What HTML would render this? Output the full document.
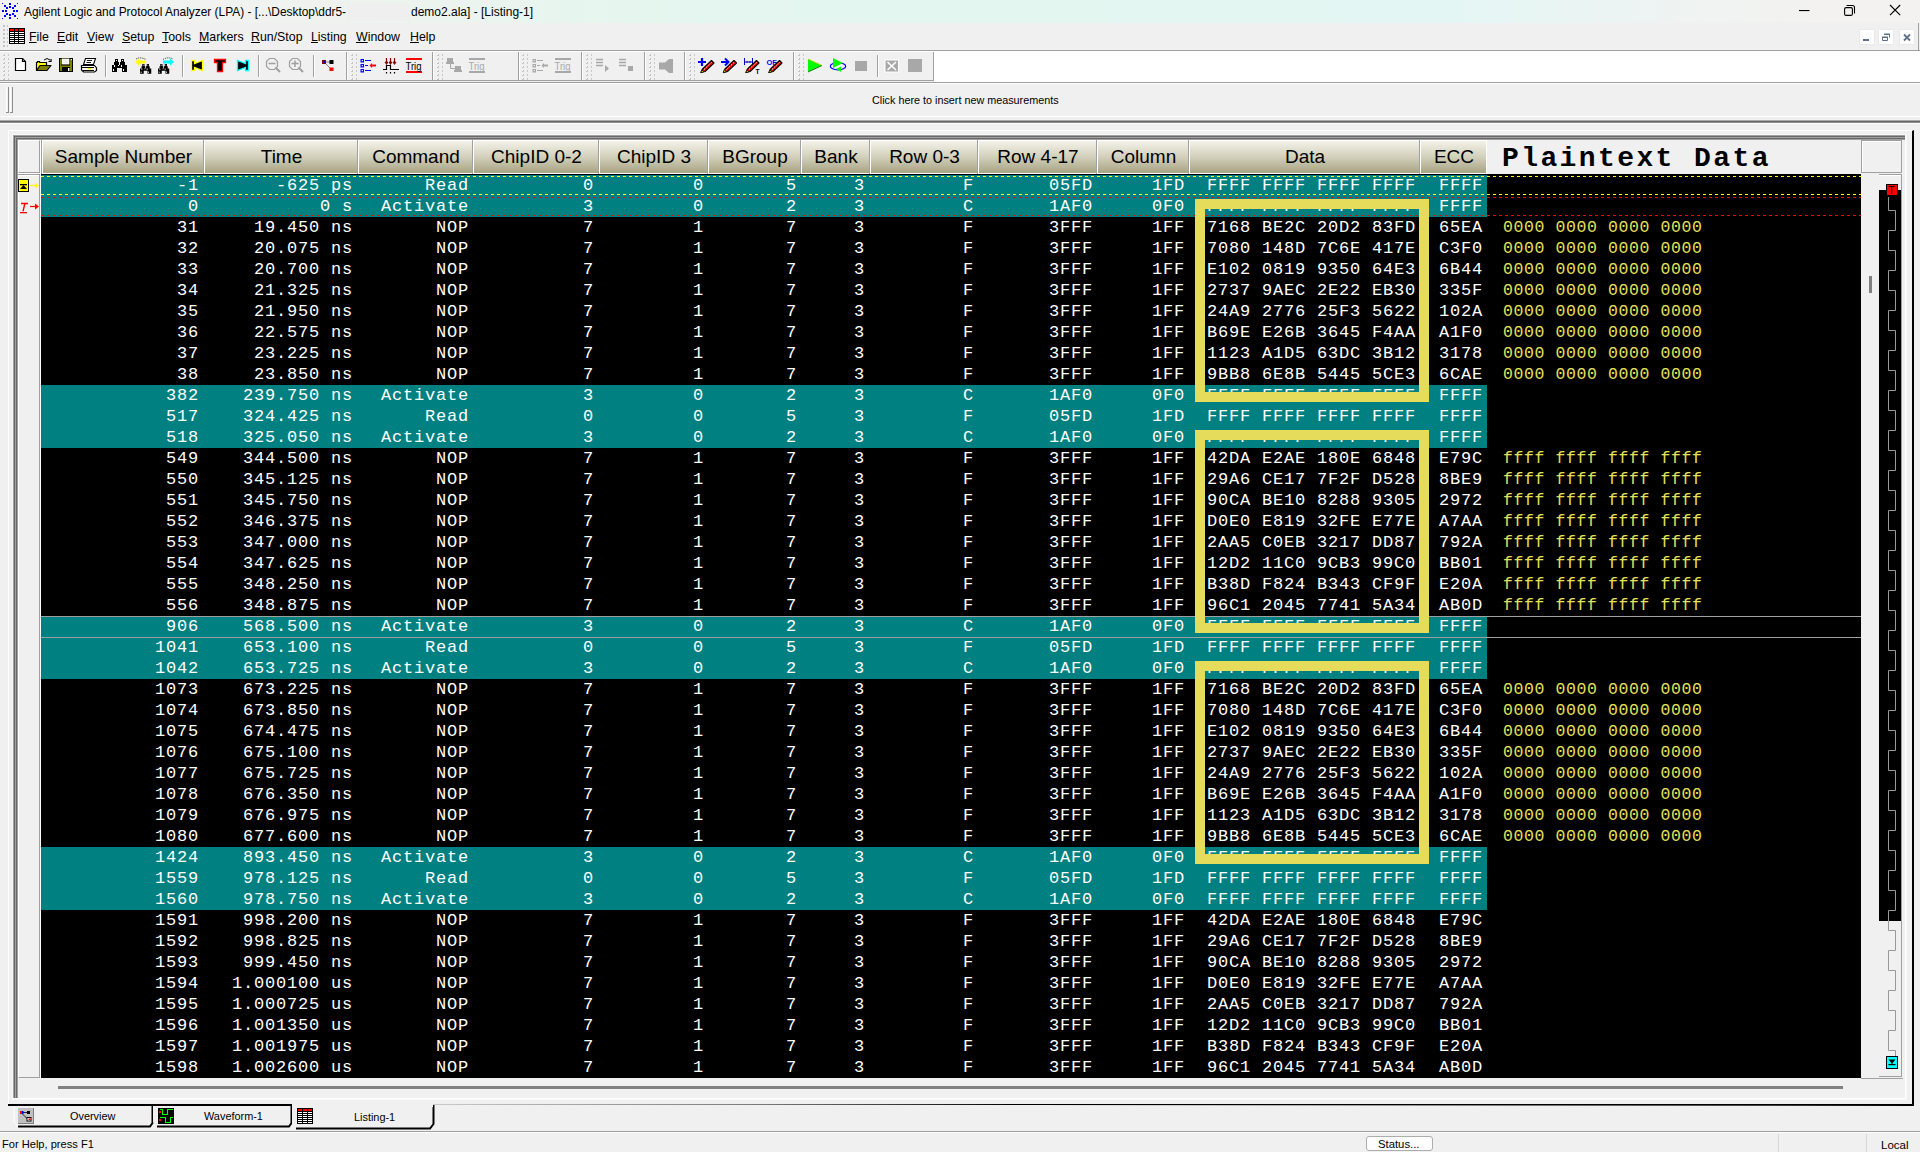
<!DOCTYPE html><html><head><meta charset="utf-8"><style>
*{margin:0;padding:0;box-sizing:border-box}
html,body{width:1920px;height:1152px;overflow:hidden;background:#f0f0f0;position:relative}
body{font-family:"Liberation Sans",sans-serif;color:#000}
.ab{position:absolute}
svg{position:absolute;overflow:visible}
.mono{font-family:"Liberation Mono",monospace}
.cell{position:absolute;height:21px;line-height:21px;text-align:right;white-space:pre;color:#fff;font-family:"Liberation Mono",monospace;font-size:17px;letter-spacing:0.8px}
.hd{position:absolute;top:140px;height:34px;text-align:center;font-size:19px;line-height:34px;color:#000}
.hg{position:absolute;left:2px;top:1px;right:1px;bottom:1px;background:linear-gradient(#f3f2e8,#d2d0bb 50%,#a7a384)}
.hd span{position:relative;left:1px}
.pt{position:absolute;left:1503px;height:21px;line-height:21px;white-space:pre;color:#e6e05a;font-family:"Liberation Mono",monospace;font-size:16.5px;letter-spacing:0.6px}
.menu{position:absolute;top:29px;font-size:13px;line-height:16px;white-space:pre;transform:scaleX(0.95);transform-origin:0 0}
</style></head><body>
<div class="ab" style="left:0px;top:0px;width:1920px;height:23px;background:linear-gradient(90deg,#f2f2f0 0%,#eff3ef 18%,#e4f6ef 35%,#e3f6f0 55%,#e3f6f3 75%,#eff3f2 88%,#f3f2f0 95%,#f3f2f0 100%)"></div>
<div class="ab" style="left:24px;top:5px;white-space:pre;font-size:11.92px;line-height:15px">Agilent Logic and Protocol Analyzer (LPA) - [...\Desktop\ddr5-</div>
<div class="ab" style="left:347px;top:3px;width:63px;height:18px;background:#eeefee"></div>
<div class="ab" style="left:411px;top:5px;white-space:pre;font-size:12px;line-height:15px">demo2.ala] - [Listing-1]</div>
<div class="ab" style="left:0px;top:23px;width:1920px;height:27px;background:#f0f0f0"></div>
<div class="menu" style="left:29px"><u>F</u>ile</div>
<div class="menu" style="left:57px"><u>E</u>dit</div>
<div class="menu" style="left:87px"><u>V</u>iew</div>
<div class="menu" style="left:122px"><u>S</u>etup</div>
<div class="menu" style="left:162px"><u>T</u>ools</div>
<div class="menu" style="left:199px"><u>M</u>arkers</div>
<div class="menu" style="left:251px"><u>R</u>un/Stop</div>
<div class="menu" style="left:311px"><u>L</u>isting</div>
<div class="menu" style="left:356px"><u>W</u>indow</div>
<div class="menu" style="left:410px"><u>H</u>elp</div>
<div class="ab" style="left:0px;top:50px;width:1920px;height:1px;background:#a0a0a0"></div>
<div class="ab" style="left:0px;top:51px;width:1920px;height:29px;background:#fff"></div>
<div class="ab" style="left:0px;top:52px;width:933px;height:28px;background:#f0f0f0"></div>
<div class="ab" style="left:0px;top:80px;width:934px;height:1px;background:#a0a0a0"></div>
<div class="ab" style="left:934px;top:51px;width:986px;height:31px;background:#fff"></div>
<div class="ab" style="left:0px;top:82px;width:1920px;height:1px;background:#a0a0a0"></div>
<div class="ab" style="left:0px;top:83px;width:1920px;height:1px;background:#fff"></div>
<div class="ab" style="left:872px;top:93px;white-space:pre;font-size:10.8px;line-height:14px">Click here to insert new measurements</div>
<div class="ab" style="left:0px;top:116px;width:1920px;height:1px;background:#fff"></div>
<div class="ab" style="left:0px;top:120px;width:1920px;height:1px;background:#a8a8a8"></div>
<div class="ab" style="left:0px;top:121px;width:1920px;height:1px;background:#696969"></div>
<div class="ab" style="left:0px;top:122px;width:1920px;height:1px;background:#8a8a8a"></div>
<div class="ab" style="left:0px;top:123px;width:1920px;height:1px;background:#fff"></div>
<div class="ab" style="left:8px;top:130px;width:1906px;height:976px;border-left:1px solid #fff;border-top:1px solid #fff;border-right:2px solid #000;border-bottom:2px solid #000"></div>
<div class="ab" style="left:12px;top:134px;width:1895px;height:1px;background:#f8f8f8"></div>
<div class="ab" style="left:12px;top:134px;width:1px;height:965px;background:#f8f8f8"></div>
<div class="ab" style="left:13px;top:135px;width:1893px;height:1px;background:#a0a0a0"></div>
<div class="ab" style="left:13px;top:135px;width:1px;height:963px;background:#a0a0a0"></div>
<div class="ab" style="left:14px;top:136px;width:1892px;height:1px;background:#696969"></div>
<div class="ab" style="left:14px;top:136px;width:1px;height:962px;background:#696969"></div>
<div class="ab" style="left:15px;top:137px;width:1891px;height:1px;background:#a0a0a0"></div>
<div class="ab" style="left:15px;top:137px;width:1px;height:961px;background:#a0a0a0"></div>
<div class="ab" style="left:16px;top:138px;width:1890px;height:1px;background:#696969"></div>
<div class="ab" style="left:16px;top:138px;width:1px;height:960px;background:#696969"></div>
<div class="ab" style="left:17px;top:139px;width:1889px;height:1px;background:#a0a0a0"></div>
<div class="ab" style="left:17px;top:139px;width:1px;height:959px;background:#a0a0a0"></div>
<div class="ab" style="left:13px;top:1098px;width:1893px;height:1px;background:#fff"></div>
<div class="ab" style="left:12px;top:1099px;width:1895px;height:1px;background:#f8f8f8"></div>
<div class="ab" style="left:1905px;top:135px;width:1px;height:964px;background:#fff"></div>
<div class="ab" style="left:1906px;top:134px;width:1px;height:966px;background:#f8f8f8"></div>
<div class="ab" style="left:18px;top:140px;width:22px;height:33px;background:#f0f0f0;border-left:1px solid #fff;border-top:1px solid #fff;border-right:1px solid #a0a0a0;border-bottom:1px solid #a0a0a0"></div>
<div class="ab" style="left:18px;top:174px;width:22px;height:904px;background:#f0f0f0;border-left:1px solid #fff;border-top:1px solid #fff;border-right:1px solid #a0a0a0;border-bottom:1px solid #a0a0a0"></div>
<div class="ab" style="left:18px;top:173px;width:23px;height:1px;background:#fff"></div>
<div class="ab" style="left:18px;top:174px;width:22px;height:1px;background:#a0a0a0"></div>
<div class="ab" style="left:19px;top:175px;width:20px;height:1px;background:#fff"></div>
<div class="ab" style="left:40px;top:140px;width:1px;height:938px;background:#fff"></div>
<div class="ab" style="left:41px;top:140px;width:1820px;height:34px;background:#fff"></div>
<div class="hd" style="left:41px;width:163px"><div class="ab" style="left:0;top:0;width:1px;bottom:0;background:#a0a0a0"></div><div class="hg"></div><span>Sample Number</span></div>
<div class="hd" style="left:203px;width:155px"><div class="ab" style="left:0;top:0;width:1px;bottom:0;background:#a0a0a0"></div><div class="hg"></div><span>Time</span></div>
<div class="hd" style="left:357px;width:116px"><div class="ab" style="left:0;top:0;width:1px;bottom:0;background:#a0a0a0"></div><div class="hg"></div><span>Command</span></div>
<div class="hd" style="left:472px;width:127px"><div class="ab" style="left:0;top:0;width:1px;bottom:0;background:#a0a0a0"></div><div class="hg"></div><span>ChipID 0-2</span></div>
<div class="hd" style="left:598px;width:110px"><div class="ab" style="left:0;top:0;width:1px;bottom:0;background:#a0a0a0"></div><div class="hg"></div><span>ChipID 3</span></div>
<div class="hd" style="left:707px;width:94px"><div class="ab" style="left:0;top:0;width:1px;bottom:0;background:#a0a0a0"></div><div class="hg"></div><span>BGroup</span></div>
<div class="hd" style="left:800px;width:70px"><div class="ab" style="left:0;top:0;width:1px;bottom:0;background:#a0a0a0"></div><div class="hg"></div><span>Bank</span></div>
<div class="hd" style="left:869px;width:109px"><div class="ab" style="left:0;top:0;width:1px;bottom:0;background:#a0a0a0"></div><div class="hg"></div><span>Row 0-3</span></div>
<div class="hd" style="left:977px;width:120px"><div class="ab" style="left:0;top:0;width:1px;bottom:0;background:#a0a0a0"></div><div class="hg"></div><span>Row 4-17</span></div>
<div class="hd" style="left:1096px;width:93px"><div class="ab" style="left:0;top:0;width:1px;bottom:0;background:#a0a0a0"></div><div class="hg"></div><span>Column</span></div>
<div class="hd" style="left:1188px;width:232px"><div class="ab" style="left:0;top:0;width:1px;bottom:0;background:#a0a0a0"></div><div class="hg"></div><span>Data</span></div>
<div class="hd" style="left:1419px;width:68px"><div class="ab" style="left:0;top:0;width:1px;bottom:0;background:#a0a0a0"></div><div class="hg"></div><span>ECC</span></div>
<div class="ab" style="left:41px;top:174px;width:1820px;height:1px;background:#000"></div>
<div class="ab" style="left:1487px;top:140px;width:374px;height:34px;background:#f0f0f0"></div>
<div class="ab" style="left:1502px;top:141px;white-space:pre;font-family:'Liberation Mono',monospace;font-weight:bold;font-size:28px;line-height:35px;letter-spacing:2.4px">Plaintext Data</div>
<div class="ab" style="left:41px;top:175px;width:1820px;height:903px;background:#000"></div>
<div class="ab" style="left:41px;top:175px;width:1446px;height:21px;background:#008080"></div>
<div class="cell" style="top:175px;right:1721px">-1</div>
<div class="cell" style="top:175px;right:1567px">-625 ps</div>
<div class="cell" style="top:175px;right:1451px">Read</div>
<div class="cell" style="top:175px;right:1326px">0</div>
<div class="cell" style="top:175px;right:1216px">0</div>
<div class="cell" style="top:175px;right:1123px">5</div>
<div class="cell" style="top:175px;right:1055px">3</div>
<div class="cell" style="top:175px;right:946px">F</div>
<div class="cell" style="top:175px;right:827px">05FD</div>
<div class="cell" style="top:175px;right:735px">1FD</div>
<div class="cell" style="top:175px;right:504px">FFFF FFFF FFFF FFFF</div>
<div class="cell" style="top:175px;right:437px">FFFF</div>
<div class="ab" style="left:41px;top:196px;width:1446px;height:21px;background:#008080"></div>
<div class="cell" style="top:196px;right:1721px">0</div>
<div class="cell" style="top:196px;right:1567px">0 s</div>
<div class="cell" style="top:196px;right:1451px">Activate</div>
<div class="cell" style="top:196px;right:1326px">3</div>
<div class="cell" style="top:196px;right:1216px">0</div>
<div class="cell" style="top:196px;right:1123px">2</div>
<div class="cell" style="top:196px;right:1055px">3</div>
<div class="cell" style="top:196px;right:946px">C</div>
<div class="cell" style="top:196px;right:827px">1AF0</div>
<div class="cell" style="top:196px;right:735px">0F0</div>
<div class="cell" style="top:196px;right:504px">FFFF FFFF FFFF FFFF</div>
<div class="cell" style="top:196px;right:437px">FFFF</div>
<div class="cell" style="top:217px;right:1721px">31</div>
<div class="cell" style="top:217px;right:1567px">19.450 ns</div>
<div class="cell" style="top:217px;right:1451px">NOP</div>
<div class="cell" style="top:217px;right:1326px">7</div>
<div class="cell" style="top:217px;right:1216px">1</div>
<div class="cell" style="top:217px;right:1123px">7</div>
<div class="cell" style="top:217px;right:1055px">3</div>
<div class="cell" style="top:217px;right:946px">F</div>
<div class="cell" style="top:217px;right:827px">3FFF</div>
<div class="cell" style="top:217px;right:735px">1FF</div>
<div class="cell" style="top:217px;right:504px">7168 BE2C 20D2 83FD</div>
<div class="cell" style="top:217px;right:437px">65EA</div>
<div class="pt" style="top:217px">0000 0000 0000 0000</div>
<div class="cell" style="top:238px;right:1721px">32</div>
<div class="cell" style="top:238px;right:1567px">20.075 ns</div>
<div class="cell" style="top:238px;right:1451px">NOP</div>
<div class="cell" style="top:238px;right:1326px">7</div>
<div class="cell" style="top:238px;right:1216px">1</div>
<div class="cell" style="top:238px;right:1123px">7</div>
<div class="cell" style="top:238px;right:1055px">3</div>
<div class="cell" style="top:238px;right:946px">F</div>
<div class="cell" style="top:238px;right:827px">3FFF</div>
<div class="cell" style="top:238px;right:735px">1FF</div>
<div class="cell" style="top:238px;right:504px">7080 148D 7C6E 417E</div>
<div class="cell" style="top:238px;right:437px">C3F0</div>
<div class="pt" style="top:238px">0000 0000 0000 0000</div>
<div class="cell" style="top:259px;right:1721px">33</div>
<div class="cell" style="top:259px;right:1567px">20.700 ns</div>
<div class="cell" style="top:259px;right:1451px">NOP</div>
<div class="cell" style="top:259px;right:1326px">7</div>
<div class="cell" style="top:259px;right:1216px">1</div>
<div class="cell" style="top:259px;right:1123px">7</div>
<div class="cell" style="top:259px;right:1055px">3</div>
<div class="cell" style="top:259px;right:946px">F</div>
<div class="cell" style="top:259px;right:827px">3FFF</div>
<div class="cell" style="top:259px;right:735px">1FF</div>
<div class="cell" style="top:259px;right:504px">E102 0819 9350 64E3</div>
<div class="cell" style="top:259px;right:437px">6B44</div>
<div class="pt" style="top:259px">0000 0000 0000 0000</div>
<div class="cell" style="top:280px;right:1721px">34</div>
<div class="cell" style="top:280px;right:1567px">21.325 ns</div>
<div class="cell" style="top:280px;right:1451px">NOP</div>
<div class="cell" style="top:280px;right:1326px">7</div>
<div class="cell" style="top:280px;right:1216px">1</div>
<div class="cell" style="top:280px;right:1123px">7</div>
<div class="cell" style="top:280px;right:1055px">3</div>
<div class="cell" style="top:280px;right:946px">F</div>
<div class="cell" style="top:280px;right:827px">3FFF</div>
<div class="cell" style="top:280px;right:735px">1FF</div>
<div class="cell" style="top:280px;right:504px">2737 9AEC 2E22 EB30</div>
<div class="cell" style="top:280px;right:437px">335F</div>
<div class="pt" style="top:280px">0000 0000 0000 0000</div>
<div class="cell" style="top:301px;right:1721px">35</div>
<div class="cell" style="top:301px;right:1567px">21.950 ns</div>
<div class="cell" style="top:301px;right:1451px">NOP</div>
<div class="cell" style="top:301px;right:1326px">7</div>
<div class="cell" style="top:301px;right:1216px">1</div>
<div class="cell" style="top:301px;right:1123px">7</div>
<div class="cell" style="top:301px;right:1055px">3</div>
<div class="cell" style="top:301px;right:946px">F</div>
<div class="cell" style="top:301px;right:827px">3FFF</div>
<div class="cell" style="top:301px;right:735px">1FF</div>
<div class="cell" style="top:301px;right:504px">24A9 2776 25F3 5622</div>
<div class="cell" style="top:301px;right:437px">102A</div>
<div class="pt" style="top:301px">0000 0000 0000 0000</div>
<div class="cell" style="top:322px;right:1721px">36</div>
<div class="cell" style="top:322px;right:1567px">22.575 ns</div>
<div class="cell" style="top:322px;right:1451px">NOP</div>
<div class="cell" style="top:322px;right:1326px">7</div>
<div class="cell" style="top:322px;right:1216px">1</div>
<div class="cell" style="top:322px;right:1123px">7</div>
<div class="cell" style="top:322px;right:1055px">3</div>
<div class="cell" style="top:322px;right:946px">F</div>
<div class="cell" style="top:322px;right:827px">3FFF</div>
<div class="cell" style="top:322px;right:735px">1FF</div>
<div class="cell" style="top:322px;right:504px">B69E E26B 3645 F4AA</div>
<div class="cell" style="top:322px;right:437px">A1F0</div>
<div class="pt" style="top:322px">0000 0000 0000 0000</div>
<div class="cell" style="top:343px;right:1721px">37</div>
<div class="cell" style="top:343px;right:1567px">23.225 ns</div>
<div class="cell" style="top:343px;right:1451px">NOP</div>
<div class="cell" style="top:343px;right:1326px">7</div>
<div class="cell" style="top:343px;right:1216px">1</div>
<div class="cell" style="top:343px;right:1123px">7</div>
<div class="cell" style="top:343px;right:1055px">3</div>
<div class="cell" style="top:343px;right:946px">F</div>
<div class="cell" style="top:343px;right:827px">3FFF</div>
<div class="cell" style="top:343px;right:735px">1FF</div>
<div class="cell" style="top:343px;right:504px">1123 A1D5 63DC 3B12</div>
<div class="cell" style="top:343px;right:437px">3178</div>
<div class="pt" style="top:343px">0000 0000 0000 0000</div>
<div class="cell" style="top:364px;right:1721px">38</div>
<div class="cell" style="top:364px;right:1567px">23.850 ns</div>
<div class="cell" style="top:364px;right:1451px">NOP</div>
<div class="cell" style="top:364px;right:1326px">7</div>
<div class="cell" style="top:364px;right:1216px">1</div>
<div class="cell" style="top:364px;right:1123px">7</div>
<div class="cell" style="top:364px;right:1055px">3</div>
<div class="cell" style="top:364px;right:946px">F</div>
<div class="cell" style="top:364px;right:827px">3FFF</div>
<div class="cell" style="top:364px;right:735px">1FF</div>
<div class="cell" style="top:364px;right:504px">9BB8 6E8B 5445 5CE3</div>
<div class="cell" style="top:364px;right:437px">6CAE</div>
<div class="pt" style="top:364px">0000 0000 0000 0000</div>
<div class="ab" style="left:41px;top:385px;width:1446px;height:21px;background:#008080"></div>
<div class="cell" style="top:385px;right:1721px">382</div>
<div class="cell" style="top:385px;right:1567px">239.750 ns</div>
<div class="cell" style="top:385px;right:1451px">Activate</div>
<div class="cell" style="top:385px;right:1326px">3</div>
<div class="cell" style="top:385px;right:1216px">0</div>
<div class="cell" style="top:385px;right:1123px">2</div>
<div class="cell" style="top:385px;right:1055px">3</div>
<div class="cell" style="top:385px;right:946px">C</div>
<div class="cell" style="top:385px;right:827px">1AF0</div>
<div class="cell" style="top:385px;right:735px">0F0</div>
<div class="cell" style="top:385px;right:504px">FFFF FFFF FFFF FFFF</div>
<div class="cell" style="top:385px;right:437px">FFFF</div>
<div class="ab" style="left:41px;top:406px;width:1446px;height:21px;background:#008080"></div>
<div class="cell" style="top:406px;right:1721px">517</div>
<div class="cell" style="top:406px;right:1567px">324.425 ns</div>
<div class="cell" style="top:406px;right:1451px">Read</div>
<div class="cell" style="top:406px;right:1326px">0</div>
<div class="cell" style="top:406px;right:1216px">0</div>
<div class="cell" style="top:406px;right:1123px">5</div>
<div class="cell" style="top:406px;right:1055px">3</div>
<div class="cell" style="top:406px;right:946px">F</div>
<div class="cell" style="top:406px;right:827px">05FD</div>
<div class="cell" style="top:406px;right:735px">1FD</div>
<div class="cell" style="top:406px;right:504px">FFFF FFFF FFFF FFFF</div>
<div class="cell" style="top:406px;right:437px">FFFF</div>
<div class="ab" style="left:41px;top:427px;width:1446px;height:21px;background:#008080"></div>
<div class="cell" style="top:427px;right:1721px">518</div>
<div class="cell" style="top:427px;right:1567px">325.050 ns</div>
<div class="cell" style="top:427px;right:1451px">Activate</div>
<div class="cell" style="top:427px;right:1326px">3</div>
<div class="cell" style="top:427px;right:1216px">0</div>
<div class="cell" style="top:427px;right:1123px">2</div>
<div class="cell" style="top:427px;right:1055px">3</div>
<div class="cell" style="top:427px;right:946px">C</div>
<div class="cell" style="top:427px;right:827px">1AF0</div>
<div class="cell" style="top:427px;right:735px">0F0</div>
<div class="cell" style="top:427px;right:504px">FFFF FFFF FFFF FFFF</div>
<div class="cell" style="top:427px;right:437px">FFFF</div>
<div class="cell" style="top:448px;right:1721px">549</div>
<div class="cell" style="top:448px;right:1567px">344.500 ns</div>
<div class="cell" style="top:448px;right:1451px">NOP</div>
<div class="cell" style="top:448px;right:1326px">7</div>
<div class="cell" style="top:448px;right:1216px">1</div>
<div class="cell" style="top:448px;right:1123px">7</div>
<div class="cell" style="top:448px;right:1055px">3</div>
<div class="cell" style="top:448px;right:946px">F</div>
<div class="cell" style="top:448px;right:827px">3FFF</div>
<div class="cell" style="top:448px;right:735px">1FF</div>
<div class="cell" style="top:448px;right:504px">42DA E2AE 180E 6848</div>
<div class="cell" style="top:448px;right:437px">E79C</div>
<div class="pt" style="top:448px">ffff ffff ffff ffff</div>
<div class="cell" style="top:469px;right:1721px">550</div>
<div class="cell" style="top:469px;right:1567px">345.125 ns</div>
<div class="cell" style="top:469px;right:1451px">NOP</div>
<div class="cell" style="top:469px;right:1326px">7</div>
<div class="cell" style="top:469px;right:1216px">1</div>
<div class="cell" style="top:469px;right:1123px">7</div>
<div class="cell" style="top:469px;right:1055px">3</div>
<div class="cell" style="top:469px;right:946px">F</div>
<div class="cell" style="top:469px;right:827px">3FFF</div>
<div class="cell" style="top:469px;right:735px">1FF</div>
<div class="cell" style="top:469px;right:504px">29A6 CE17 7F2F D528</div>
<div class="cell" style="top:469px;right:437px">8BE9</div>
<div class="pt" style="top:469px">ffff ffff ffff ffff</div>
<div class="cell" style="top:490px;right:1721px">551</div>
<div class="cell" style="top:490px;right:1567px">345.750 ns</div>
<div class="cell" style="top:490px;right:1451px">NOP</div>
<div class="cell" style="top:490px;right:1326px">7</div>
<div class="cell" style="top:490px;right:1216px">1</div>
<div class="cell" style="top:490px;right:1123px">7</div>
<div class="cell" style="top:490px;right:1055px">3</div>
<div class="cell" style="top:490px;right:946px">F</div>
<div class="cell" style="top:490px;right:827px">3FFF</div>
<div class="cell" style="top:490px;right:735px">1FF</div>
<div class="cell" style="top:490px;right:504px">90CA BE10 8288 9305</div>
<div class="cell" style="top:490px;right:437px">2972</div>
<div class="pt" style="top:490px">ffff ffff ffff ffff</div>
<div class="cell" style="top:511px;right:1721px">552</div>
<div class="cell" style="top:511px;right:1567px">346.375 ns</div>
<div class="cell" style="top:511px;right:1451px">NOP</div>
<div class="cell" style="top:511px;right:1326px">7</div>
<div class="cell" style="top:511px;right:1216px">1</div>
<div class="cell" style="top:511px;right:1123px">7</div>
<div class="cell" style="top:511px;right:1055px">3</div>
<div class="cell" style="top:511px;right:946px">F</div>
<div class="cell" style="top:511px;right:827px">3FFF</div>
<div class="cell" style="top:511px;right:735px">1FF</div>
<div class="cell" style="top:511px;right:504px">D0E0 E819 32FE E77E</div>
<div class="cell" style="top:511px;right:437px">A7AA</div>
<div class="pt" style="top:511px">ffff ffff ffff ffff</div>
<div class="cell" style="top:532px;right:1721px">553</div>
<div class="cell" style="top:532px;right:1567px">347.000 ns</div>
<div class="cell" style="top:532px;right:1451px">NOP</div>
<div class="cell" style="top:532px;right:1326px">7</div>
<div class="cell" style="top:532px;right:1216px">1</div>
<div class="cell" style="top:532px;right:1123px">7</div>
<div class="cell" style="top:532px;right:1055px">3</div>
<div class="cell" style="top:532px;right:946px">F</div>
<div class="cell" style="top:532px;right:827px">3FFF</div>
<div class="cell" style="top:532px;right:735px">1FF</div>
<div class="cell" style="top:532px;right:504px">2AA5 C0EB 3217 DD87</div>
<div class="cell" style="top:532px;right:437px">792A</div>
<div class="pt" style="top:532px">ffff ffff ffff ffff</div>
<div class="cell" style="top:553px;right:1721px">554</div>
<div class="cell" style="top:553px;right:1567px">347.625 ns</div>
<div class="cell" style="top:553px;right:1451px">NOP</div>
<div class="cell" style="top:553px;right:1326px">7</div>
<div class="cell" style="top:553px;right:1216px">1</div>
<div class="cell" style="top:553px;right:1123px">7</div>
<div class="cell" style="top:553px;right:1055px">3</div>
<div class="cell" style="top:553px;right:946px">F</div>
<div class="cell" style="top:553px;right:827px">3FFF</div>
<div class="cell" style="top:553px;right:735px">1FF</div>
<div class="cell" style="top:553px;right:504px">12D2 11C0 9CB3 99C0</div>
<div class="cell" style="top:553px;right:437px">BB01</div>
<div class="pt" style="top:553px">ffff ffff ffff ffff</div>
<div class="cell" style="top:574px;right:1721px">555</div>
<div class="cell" style="top:574px;right:1567px">348.250 ns</div>
<div class="cell" style="top:574px;right:1451px">NOP</div>
<div class="cell" style="top:574px;right:1326px">7</div>
<div class="cell" style="top:574px;right:1216px">1</div>
<div class="cell" style="top:574px;right:1123px">7</div>
<div class="cell" style="top:574px;right:1055px">3</div>
<div class="cell" style="top:574px;right:946px">F</div>
<div class="cell" style="top:574px;right:827px">3FFF</div>
<div class="cell" style="top:574px;right:735px">1FF</div>
<div class="cell" style="top:574px;right:504px">B38D F824 B343 CF9F</div>
<div class="cell" style="top:574px;right:437px">E20A</div>
<div class="pt" style="top:574px">ffff ffff ffff ffff</div>
<div class="cell" style="top:595px;right:1721px">556</div>
<div class="cell" style="top:595px;right:1567px">348.875 ns</div>
<div class="cell" style="top:595px;right:1451px">NOP</div>
<div class="cell" style="top:595px;right:1326px">7</div>
<div class="cell" style="top:595px;right:1216px">1</div>
<div class="cell" style="top:595px;right:1123px">7</div>
<div class="cell" style="top:595px;right:1055px">3</div>
<div class="cell" style="top:595px;right:946px">F</div>
<div class="cell" style="top:595px;right:827px">3FFF</div>
<div class="cell" style="top:595px;right:735px">1FF</div>
<div class="cell" style="top:595px;right:504px">96C1 2045 7741 5A34</div>
<div class="cell" style="top:595px;right:437px">AB0D</div>
<div class="pt" style="top:595px">ffff ffff ffff ffff</div>
<div class="ab" style="left:41px;top:616px;width:1446px;height:21px;background:#008080"></div>
<div class="cell" style="top:616px;right:1721px">906</div>
<div class="cell" style="top:616px;right:1567px">568.500 ns</div>
<div class="cell" style="top:616px;right:1451px">Activate</div>
<div class="cell" style="top:616px;right:1326px">3</div>
<div class="cell" style="top:616px;right:1216px">0</div>
<div class="cell" style="top:616px;right:1123px">2</div>
<div class="cell" style="top:616px;right:1055px">3</div>
<div class="cell" style="top:616px;right:946px">C</div>
<div class="cell" style="top:616px;right:827px">1AF0</div>
<div class="cell" style="top:616px;right:735px">0F0</div>
<div class="cell" style="top:616px;right:504px">FFFF FFFF FFFF FFFF</div>
<div class="cell" style="top:616px;right:437px">FFFF</div>
<div class="ab" style="left:41px;top:637px;width:1446px;height:21px;background:#008080"></div>
<div class="cell" style="top:637px;right:1721px">1041</div>
<div class="cell" style="top:637px;right:1567px">653.100 ns</div>
<div class="cell" style="top:637px;right:1451px">Read</div>
<div class="cell" style="top:637px;right:1326px">0</div>
<div class="cell" style="top:637px;right:1216px">0</div>
<div class="cell" style="top:637px;right:1123px">5</div>
<div class="cell" style="top:637px;right:1055px">3</div>
<div class="cell" style="top:637px;right:946px">F</div>
<div class="cell" style="top:637px;right:827px">05FD</div>
<div class="cell" style="top:637px;right:735px">1FD</div>
<div class="cell" style="top:637px;right:504px">FFFF FFFF FFFF FFFF</div>
<div class="cell" style="top:637px;right:437px">FFFF</div>
<div class="ab" style="left:41px;top:658px;width:1446px;height:21px;background:#008080"></div>
<div class="cell" style="top:658px;right:1721px">1042</div>
<div class="cell" style="top:658px;right:1567px">653.725 ns</div>
<div class="cell" style="top:658px;right:1451px">Activate</div>
<div class="cell" style="top:658px;right:1326px">3</div>
<div class="cell" style="top:658px;right:1216px">0</div>
<div class="cell" style="top:658px;right:1123px">2</div>
<div class="cell" style="top:658px;right:1055px">3</div>
<div class="cell" style="top:658px;right:946px">C</div>
<div class="cell" style="top:658px;right:827px">1AF0</div>
<div class="cell" style="top:658px;right:735px">0F0</div>
<div class="cell" style="top:658px;right:504px">FFFF FFFF FFFF FFFF</div>
<div class="cell" style="top:658px;right:437px">FFFF</div>
<div class="cell" style="top:679px;right:1721px">1073</div>
<div class="cell" style="top:679px;right:1567px">673.225 ns</div>
<div class="cell" style="top:679px;right:1451px">NOP</div>
<div class="cell" style="top:679px;right:1326px">7</div>
<div class="cell" style="top:679px;right:1216px">1</div>
<div class="cell" style="top:679px;right:1123px">7</div>
<div class="cell" style="top:679px;right:1055px">3</div>
<div class="cell" style="top:679px;right:946px">F</div>
<div class="cell" style="top:679px;right:827px">3FFF</div>
<div class="cell" style="top:679px;right:735px">1FF</div>
<div class="cell" style="top:679px;right:504px">7168 BE2C 20D2 83FD</div>
<div class="cell" style="top:679px;right:437px">65EA</div>
<div class="pt" style="top:679px">0000 0000 0000 0000</div>
<div class="cell" style="top:700px;right:1721px">1074</div>
<div class="cell" style="top:700px;right:1567px">673.850 ns</div>
<div class="cell" style="top:700px;right:1451px">NOP</div>
<div class="cell" style="top:700px;right:1326px">7</div>
<div class="cell" style="top:700px;right:1216px">1</div>
<div class="cell" style="top:700px;right:1123px">7</div>
<div class="cell" style="top:700px;right:1055px">3</div>
<div class="cell" style="top:700px;right:946px">F</div>
<div class="cell" style="top:700px;right:827px">3FFF</div>
<div class="cell" style="top:700px;right:735px">1FF</div>
<div class="cell" style="top:700px;right:504px">7080 148D 7C6E 417E</div>
<div class="cell" style="top:700px;right:437px">C3F0</div>
<div class="pt" style="top:700px">0000 0000 0000 0000</div>
<div class="cell" style="top:721px;right:1721px">1075</div>
<div class="cell" style="top:721px;right:1567px">674.475 ns</div>
<div class="cell" style="top:721px;right:1451px">NOP</div>
<div class="cell" style="top:721px;right:1326px">7</div>
<div class="cell" style="top:721px;right:1216px">1</div>
<div class="cell" style="top:721px;right:1123px">7</div>
<div class="cell" style="top:721px;right:1055px">3</div>
<div class="cell" style="top:721px;right:946px">F</div>
<div class="cell" style="top:721px;right:827px">3FFF</div>
<div class="cell" style="top:721px;right:735px">1FF</div>
<div class="cell" style="top:721px;right:504px">E102 0819 9350 64E3</div>
<div class="cell" style="top:721px;right:437px">6B44</div>
<div class="pt" style="top:721px">0000 0000 0000 0000</div>
<div class="cell" style="top:742px;right:1721px">1076</div>
<div class="cell" style="top:742px;right:1567px">675.100 ns</div>
<div class="cell" style="top:742px;right:1451px">NOP</div>
<div class="cell" style="top:742px;right:1326px">7</div>
<div class="cell" style="top:742px;right:1216px">1</div>
<div class="cell" style="top:742px;right:1123px">7</div>
<div class="cell" style="top:742px;right:1055px">3</div>
<div class="cell" style="top:742px;right:946px">F</div>
<div class="cell" style="top:742px;right:827px">3FFF</div>
<div class="cell" style="top:742px;right:735px">1FF</div>
<div class="cell" style="top:742px;right:504px">2737 9AEC 2E22 EB30</div>
<div class="cell" style="top:742px;right:437px">335F</div>
<div class="pt" style="top:742px">0000 0000 0000 0000</div>
<div class="cell" style="top:763px;right:1721px">1077</div>
<div class="cell" style="top:763px;right:1567px">675.725 ns</div>
<div class="cell" style="top:763px;right:1451px">NOP</div>
<div class="cell" style="top:763px;right:1326px">7</div>
<div class="cell" style="top:763px;right:1216px">1</div>
<div class="cell" style="top:763px;right:1123px">7</div>
<div class="cell" style="top:763px;right:1055px">3</div>
<div class="cell" style="top:763px;right:946px">F</div>
<div class="cell" style="top:763px;right:827px">3FFF</div>
<div class="cell" style="top:763px;right:735px">1FF</div>
<div class="cell" style="top:763px;right:504px">24A9 2776 25F3 5622</div>
<div class="cell" style="top:763px;right:437px">102A</div>
<div class="pt" style="top:763px">0000 0000 0000 0000</div>
<div class="cell" style="top:784px;right:1721px">1078</div>
<div class="cell" style="top:784px;right:1567px">676.350 ns</div>
<div class="cell" style="top:784px;right:1451px">NOP</div>
<div class="cell" style="top:784px;right:1326px">7</div>
<div class="cell" style="top:784px;right:1216px">1</div>
<div class="cell" style="top:784px;right:1123px">7</div>
<div class="cell" style="top:784px;right:1055px">3</div>
<div class="cell" style="top:784px;right:946px">F</div>
<div class="cell" style="top:784px;right:827px">3FFF</div>
<div class="cell" style="top:784px;right:735px">1FF</div>
<div class="cell" style="top:784px;right:504px">B69E E26B 3645 F4AA</div>
<div class="cell" style="top:784px;right:437px">A1F0</div>
<div class="pt" style="top:784px">0000 0000 0000 0000</div>
<div class="cell" style="top:805px;right:1721px">1079</div>
<div class="cell" style="top:805px;right:1567px">676.975 ns</div>
<div class="cell" style="top:805px;right:1451px">NOP</div>
<div class="cell" style="top:805px;right:1326px">7</div>
<div class="cell" style="top:805px;right:1216px">1</div>
<div class="cell" style="top:805px;right:1123px">7</div>
<div class="cell" style="top:805px;right:1055px">3</div>
<div class="cell" style="top:805px;right:946px">F</div>
<div class="cell" style="top:805px;right:827px">3FFF</div>
<div class="cell" style="top:805px;right:735px">1FF</div>
<div class="cell" style="top:805px;right:504px">1123 A1D5 63DC 3B12</div>
<div class="cell" style="top:805px;right:437px">3178</div>
<div class="pt" style="top:805px">0000 0000 0000 0000</div>
<div class="cell" style="top:826px;right:1721px">1080</div>
<div class="cell" style="top:826px;right:1567px">677.600 ns</div>
<div class="cell" style="top:826px;right:1451px">NOP</div>
<div class="cell" style="top:826px;right:1326px">7</div>
<div class="cell" style="top:826px;right:1216px">1</div>
<div class="cell" style="top:826px;right:1123px">7</div>
<div class="cell" style="top:826px;right:1055px">3</div>
<div class="cell" style="top:826px;right:946px">F</div>
<div class="cell" style="top:826px;right:827px">3FFF</div>
<div class="cell" style="top:826px;right:735px">1FF</div>
<div class="cell" style="top:826px;right:504px">9BB8 6E8B 5445 5CE3</div>
<div class="cell" style="top:826px;right:437px">6CAE</div>
<div class="pt" style="top:826px">0000 0000 0000 0000</div>
<div class="ab" style="left:41px;top:847px;width:1446px;height:21px;background:#008080"></div>
<div class="cell" style="top:847px;right:1721px">1424</div>
<div class="cell" style="top:847px;right:1567px">893.450 ns</div>
<div class="cell" style="top:847px;right:1451px">Activate</div>
<div class="cell" style="top:847px;right:1326px">3</div>
<div class="cell" style="top:847px;right:1216px">0</div>
<div class="cell" style="top:847px;right:1123px">2</div>
<div class="cell" style="top:847px;right:1055px">3</div>
<div class="cell" style="top:847px;right:946px">C</div>
<div class="cell" style="top:847px;right:827px">1AF0</div>
<div class="cell" style="top:847px;right:735px">0F0</div>
<div class="cell" style="top:847px;right:504px">FFFF FFFF FFFF FFFF</div>
<div class="cell" style="top:847px;right:437px">FFFF</div>
<div class="ab" style="left:41px;top:868px;width:1446px;height:21px;background:#008080"></div>
<div class="cell" style="top:868px;right:1721px">1559</div>
<div class="cell" style="top:868px;right:1567px">978.125 ns</div>
<div class="cell" style="top:868px;right:1451px">Read</div>
<div class="cell" style="top:868px;right:1326px">0</div>
<div class="cell" style="top:868px;right:1216px">0</div>
<div class="cell" style="top:868px;right:1123px">5</div>
<div class="cell" style="top:868px;right:1055px">3</div>
<div class="cell" style="top:868px;right:946px">F</div>
<div class="cell" style="top:868px;right:827px">05FD</div>
<div class="cell" style="top:868px;right:735px">1FD</div>
<div class="cell" style="top:868px;right:504px">FFFF FFFF FFFF FFFF</div>
<div class="cell" style="top:868px;right:437px">FFFF</div>
<div class="ab" style="left:41px;top:889px;width:1446px;height:21px;background:#008080"></div>
<div class="cell" style="top:889px;right:1721px">1560</div>
<div class="cell" style="top:889px;right:1567px">978.750 ns</div>
<div class="cell" style="top:889px;right:1451px">Activate</div>
<div class="cell" style="top:889px;right:1326px">3</div>
<div class="cell" style="top:889px;right:1216px">0</div>
<div class="cell" style="top:889px;right:1123px">2</div>
<div class="cell" style="top:889px;right:1055px">3</div>
<div class="cell" style="top:889px;right:946px">C</div>
<div class="cell" style="top:889px;right:827px">1AF0</div>
<div class="cell" style="top:889px;right:735px">0F0</div>
<div class="cell" style="top:889px;right:504px">FFFF FFFF FFFF FFFF</div>
<div class="cell" style="top:889px;right:437px">FFFF</div>
<div class="cell" style="top:910px;right:1721px">1591</div>
<div class="cell" style="top:910px;right:1567px">998.200 ns</div>
<div class="cell" style="top:910px;right:1451px">NOP</div>
<div class="cell" style="top:910px;right:1326px">7</div>
<div class="cell" style="top:910px;right:1216px">1</div>
<div class="cell" style="top:910px;right:1123px">7</div>
<div class="cell" style="top:910px;right:1055px">3</div>
<div class="cell" style="top:910px;right:946px">F</div>
<div class="cell" style="top:910px;right:827px">3FFF</div>
<div class="cell" style="top:910px;right:735px">1FF</div>
<div class="cell" style="top:910px;right:504px">42DA E2AE 180E 6848</div>
<div class="cell" style="top:910px;right:437px">E79C</div>
<div class="cell" style="top:931px;right:1721px">1592</div>
<div class="cell" style="top:931px;right:1567px">998.825 ns</div>
<div class="cell" style="top:931px;right:1451px">NOP</div>
<div class="cell" style="top:931px;right:1326px">7</div>
<div class="cell" style="top:931px;right:1216px">1</div>
<div class="cell" style="top:931px;right:1123px">7</div>
<div class="cell" style="top:931px;right:1055px">3</div>
<div class="cell" style="top:931px;right:946px">F</div>
<div class="cell" style="top:931px;right:827px">3FFF</div>
<div class="cell" style="top:931px;right:735px">1FF</div>
<div class="cell" style="top:931px;right:504px">29A6 CE17 7F2F D528</div>
<div class="cell" style="top:931px;right:437px">8BE9</div>
<div class="cell" style="top:952px;right:1721px">1593</div>
<div class="cell" style="top:952px;right:1567px">999.450 ns</div>
<div class="cell" style="top:952px;right:1451px">NOP</div>
<div class="cell" style="top:952px;right:1326px">7</div>
<div class="cell" style="top:952px;right:1216px">1</div>
<div class="cell" style="top:952px;right:1123px">7</div>
<div class="cell" style="top:952px;right:1055px">3</div>
<div class="cell" style="top:952px;right:946px">F</div>
<div class="cell" style="top:952px;right:827px">3FFF</div>
<div class="cell" style="top:952px;right:735px">1FF</div>
<div class="cell" style="top:952px;right:504px">90CA BE10 8288 9305</div>
<div class="cell" style="top:952px;right:437px">2972</div>
<div class="cell" style="top:973px;right:1721px">1594</div>
<div class="cell" style="top:973px;right:1567px">1.000100 us</div>
<div class="cell" style="top:973px;right:1451px">NOP</div>
<div class="cell" style="top:973px;right:1326px">7</div>
<div class="cell" style="top:973px;right:1216px">1</div>
<div class="cell" style="top:973px;right:1123px">7</div>
<div class="cell" style="top:973px;right:1055px">3</div>
<div class="cell" style="top:973px;right:946px">F</div>
<div class="cell" style="top:973px;right:827px">3FFF</div>
<div class="cell" style="top:973px;right:735px">1FF</div>
<div class="cell" style="top:973px;right:504px">D0E0 E819 32FE E77E</div>
<div class="cell" style="top:973px;right:437px">A7AA</div>
<div class="cell" style="top:994px;right:1721px">1595</div>
<div class="cell" style="top:994px;right:1567px">1.000725 us</div>
<div class="cell" style="top:994px;right:1451px">NOP</div>
<div class="cell" style="top:994px;right:1326px">7</div>
<div class="cell" style="top:994px;right:1216px">1</div>
<div class="cell" style="top:994px;right:1123px">7</div>
<div class="cell" style="top:994px;right:1055px">3</div>
<div class="cell" style="top:994px;right:946px">F</div>
<div class="cell" style="top:994px;right:827px">3FFF</div>
<div class="cell" style="top:994px;right:735px">1FF</div>
<div class="cell" style="top:994px;right:504px">2AA5 C0EB 3217 DD87</div>
<div class="cell" style="top:994px;right:437px">792A</div>
<div class="cell" style="top:1015px;right:1721px">1596</div>
<div class="cell" style="top:1015px;right:1567px">1.001350 us</div>
<div class="cell" style="top:1015px;right:1451px">NOP</div>
<div class="cell" style="top:1015px;right:1326px">7</div>
<div class="cell" style="top:1015px;right:1216px">1</div>
<div class="cell" style="top:1015px;right:1123px">7</div>
<div class="cell" style="top:1015px;right:1055px">3</div>
<div class="cell" style="top:1015px;right:946px">F</div>
<div class="cell" style="top:1015px;right:827px">3FFF</div>
<div class="cell" style="top:1015px;right:735px">1FF</div>
<div class="cell" style="top:1015px;right:504px">12D2 11C0 9CB3 99C0</div>
<div class="cell" style="top:1015px;right:437px">BB01</div>
<div class="cell" style="top:1036px;right:1721px">1597</div>
<div class="cell" style="top:1036px;right:1567px">1.001975 us</div>
<div class="cell" style="top:1036px;right:1451px">NOP</div>
<div class="cell" style="top:1036px;right:1326px">7</div>
<div class="cell" style="top:1036px;right:1216px">1</div>
<div class="cell" style="top:1036px;right:1123px">7</div>
<div class="cell" style="top:1036px;right:1055px">3</div>
<div class="cell" style="top:1036px;right:946px">F</div>
<div class="cell" style="top:1036px;right:827px">3FFF</div>
<div class="cell" style="top:1036px;right:735px">1FF</div>
<div class="cell" style="top:1036px;right:504px">B38D F824 B343 CF9F</div>
<div class="cell" style="top:1036px;right:437px">E20A</div>
<div class="cell" style="top:1057px;right:1721px">1598</div>
<div class="cell" style="top:1057px;right:1567px">1.002600 us</div>
<div class="cell" style="top:1057px;right:1451px">NOP</div>
<div class="cell" style="top:1057px;right:1326px">7</div>
<div class="cell" style="top:1057px;right:1216px">1</div>
<div class="cell" style="top:1057px;right:1123px">7</div>
<div class="cell" style="top:1057px;right:1055px">3</div>
<div class="cell" style="top:1057px;right:946px">F</div>
<div class="cell" style="top:1057px;right:827px">3FFF</div>
<div class="cell" style="top:1057px;right:735px">1FF</div>
<div class="cell" style="top:1057px;right:504px">96C1 2045 7741 5A34</div>
<div class="cell" style="top:1057px;right:437px">AB0D</div>
<div class="ab" style="left:41px;top:176px;width:1820px;height:1px;background:repeating-linear-gradient(90deg,#ffff00 0 3px,transparent 3px 6px)"></div>
<div class="ab" style="left:41px;top:194px;width:1820px;height:1px;background:repeating-linear-gradient(90deg,#ffff00 0 3px,transparent 3px 6px)"></div>
<div class="ab" style="left:41px;top:197px;width:1820px;height:1px;background:repeating-linear-gradient(90deg,#ff0000 0 3px,transparent 3px 6px)"></div>
<div class="ab" style="left:41px;top:215px;width:1820px;height:1px;background:repeating-linear-gradient(90deg,#ff0000 0 3px,transparent 3px 6px)"></div>
<div class="ab" style="left:41px;top:616px;width:1820px;height:1px;background:#a0a0a0"></div>
<div class="ab" style="left:41px;top:637px;width:1820px;height:1px;background:#a0a0a0"></div>
<div class="ab" style="left:1195px;top:199px;width:234px;height:203px;border:10px solid #e5dc5b"></div>
<div class="ab" style="left:1195px;top:430px;width:234px;height:203px;border:10px solid #e5dc5b"></div>
<div class="ab" style="left:1195px;top:661px;width:234px;height:203px;border:10px solid #e5dc5b"></div>
<div class="ab" style="left:1861px;top:140px;width:41px;height:33px;background:#f0f0f0;border:1px solid #a0a0a0;box-shadow:inset 1px 1px 0 #fff"></div>
<div class="ab" style="left:1879px;top:174px;width:23px;height:1px;background:#a0a0a0"></div>
<div class="ab" style="left:1879px;top:175px;width:22px;height:1px;background:#fff"></div>
<div class="ab" style="left:1901px;top:174px;width:1px;height:903px;background:#a0a0a0"></div>
<div class="ab" style="left:1879px;top:1076px;width:23px;height:1px;background:#a0a0a0"></div>
<div class="ab" style="left:1861px;top:1078px;width:42px;height:1px;background:#a0a0a0"></div>
<div class="ab" style="left:1879px;top:190px;width:22px;height:731px;background:#000"></div>
<div class="ab" style="left:1869px;top:276px;width:3px;height:17px;background:#808080"></div>
<svg style="left:0;top:0" width="1920" height="1152"><path d="M1888.5 197 V210.5 H1895.5 V230.5 H1888.5 V250.5 H1895.5 V270.5 H1888.5 V290.5 H1895.5 V310.5 H1888.5 V330.5 H1895.5 V350.5 H1888.5 V370.5 H1895.5 V390.5 H1888.5 V410.5 H1895.5 V430.5 H1888.5 V450.5 H1895.5 V470.5 H1888.5 V490.5 H1895.5 V510.5 H1888.5 V530.5 H1895.5 V550.5 H1888.5 V570.5 H1895.5 V590.5 H1888.5 V610.5 H1895.5 V630.5 H1888.5 V650.5 H1895.5 V670.5 H1888.5 V690.5 H1895.5 V710.5 H1888.5 V730.5 H1895.5 V750.5 H1888.5 V770.5 H1895.5 V790.5 H1888.5 V810.5 H1895.5 V830.5 H1888.5 V850.5 H1895.5 V870.5 H1888.5 V890.5 H1895.5 V910.5 H1888.5 V930.5 H1895.5 V950.5 H1888.5 V970.5 H1895.5 V990.5 H1888.5 V1010.5 H1895.5 V1030.5 H1888.5 V1050.5 H1895.5 V1056" fill="none" stroke="#999" stroke-width="1"/></svg>
<div class="ab" style="left:1886px;top:184px;width:12px;height:12px;background:#ff0000;border:1px solid #000"></div>
<div class="ab" style="left:1888px;top:184px;white-space:pre;font-size:11px;line-height:12px;color:#000">T</div>
<svg style="left:1886px;top:1056px" width="12" height="13" viewBox="0 0 12 13"><rect x="0.5" y="0.5" width="11" height="12" fill="#00ffff" stroke="#000"/><path d="M2.5 3.5 H9.5 L7 6.5 V7.5 H5 V6.5 Z" fill="#000"/><rect x="2.5" y="8" width="7" height="1.2" fill="#000"/></svg>
<div class="ab" style="left:58px;top:1086px;width:1785px;height:3px;background:#808080"></div>
<div class="ab" style="left:8px;top:1104px;width:1906px;height:2px;background:#000"></div>
<svg style="left:0;top:1100px" width="450" height="32" viewBox="0 1100 450 32"><path d="M14 1106 V1122 L18 1126 H150 L152 1123 V1106" fill="#f0f0f0" stroke="none"/><path d="M14 1106 V1122 L18 1126" fill="none" stroke="#fff" stroke-width="1"/><path d="M18 1126.5 H150 L152.5 1123 V1106" fill="none" stroke="#000" stroke-width="2"/><path d="M153 1106 V1122 L157 1126 H289 L291 1123 V1106" fill="#f0f0f0"/><path d="M157 1126.5 H289 L291.5 1123 V1106" fill="none" stroke="#000" stroke-width="2"/><path d="M292 1104 V1124 L296 1128 H430 L433 1124 V1106 H1914" fill="#f0f0f0"/><path d="M296 1128.5 H430 L433.5 1124 V1105" fill="none" stroke="#000" stroke-width="2"/></svg>
<div class="ab" style="left:292px;top:1104px;width:141px;height:3px;background:#f0f0f0"></div>
<div class="ab" style="left:70px;top:1109px;white-space:pre;font-size:10.9px;line-height:15px">Overview</div>
<div class="ab" style="left:204px;top:1109px;white-space:pre;font-size:10.9px;line-height:15px">Waveform-1</div>
<div class="ab" style="left:354px;top:1110px;white-space:pre;font-size:10.9px;line-height:15px">Listing-1</div>
<div class="ab" style="left:0px;top:1131px;width:1920px;height:1px;background:#a0a0a0"></div>
<div class="ab" style="left:0px;top:1132px;width:1920px;height:1px;background:#fff"></div>
<div class="ab" style="left:2px;top:1137px;white-space:pre;font-size:11.1px;line-height:15px">For Help, press F1</div>
<div class="ab" style="left:1366px;top:1136px;width:67px;height:15px;background:#fdfdfd;border:1px solid #adadad;border-radius:3px"></div>
<div class="ab" style="left:1378px;top:1137px;white-space:pre;font-size:11.3px;line-height:15px">Status...</div>
<div class="ab" style="left:1778px;top:1134px;width:1px;height:18px;background:#d8d8d8"></div>
<div class="ab" style="left:1866px;top:1134px;width:1px;height:18px;background:#d8d8d8"></div>
<div class="ab" style="left:1881px;top:1138px;white-space:pre;font-size:11.5px;line-height:15px">Local</div>
<svg style="left:0;top:50px" width="940" height="34" viewBox="0 50 940 34"><rect x="0" y="52" width="346" height="28" fill="#f0f0f0"/><rect x="346" y="52" width="1" height="28" fill="#a0a0a0"/><rect x="347" y="52" width="1" height="28" fill="#fff"/><rect x="348" y="52" width="84" height="28" fill="#f0f0f0"/><rect x="432" y="52" width="1" height="28" fill="#a0a0a0"/><rect x="433" y="52" width="1" height="28" fill="#fff"/><rect x="434" y="52" width="84" height="28" fill="#f0f0f0"/><rect x="518" y="52" width="1" height="28" fill="#a0a0a0"/><rect x="519" y="52" width="1" height="28" fill="#fff"/><rect x="520" y="52" width="61" height="28" fill="#f0f0f0"/><rect x="581" y="52" width="1" height="28" fill="#a0a0a0"/><rect x="582" y="52" width="1" height="28" fill="#fff"/><rect x="583" y="52" width="61" height="28" fill="#f0f0f0"/><rect x="644" y="52" width="1" height="28" fill="#a0a0a0"/><rect x="645" y="52" width="1" height="28" fill="#fff"/><rect x="646" y="52" width="38" height="28" fill="#f0f0f0"/><rect x="684" y="52" width="1" height="28" fill="#a0a0a0"/><rect x="685" y="52" width="1" height="28" fill="#fff"/><rect x="686" y="52" width="107" height="28" fill="#f0f0f0"/><rect x="793" y="52" width="1" height="28" fill="#a0a0a0"/><rect x="794" y="52" width="1" height="28" fill="#fff"/><rect x="795" y="52" width="138" height="28" fill="#f0f0f0"/><rect x="933" y="52" width="1" height="28" fill="#a0a0a0"/><rect x="934" y="52" width="1" height="28" fill="#fff"/><rect x="3" y="54" width="2" height="2" fill="#c4c4c4"/><rect x="3" y="54" width="1" height="1" fill="#fff"/><rect x="8" y="54" width="1" height="2" fill="#c8c8c8"/><rect x="3" y="58" width="2" height="2" fill="#c4c4c4"/><rect x="3" y="58" width="1" height="1" fill="#fff"/><rect x="8" y="58" width="1" height="2" fill="#c8c8c8"/><rect x="3" y="62" width="2" height="2" fill="#c4c4c4"/><rect x="3" y="62" width="1" height="1" fill="#fff"/><rect x="8" y="62" width="1" height="2" fill="#c8c8c8"/><rect x="3" y="66" width="2" height="2" fill="#c4c4c4"/><rect x="3" y="66" width="1" height="1" fill="#fff"/><rect x="8" y="66" width="1" height="2" fill="#c8c8c8"/><rect x="3" y="70" width="2" height="2" fill="#c4c4c4"/><rect x="3" y="70" width="1" height="1" fill="#fff"/><rect x="8" y="70" width="1" height="2" fill="#c8c8c8"/><rect x="3" y="74" width="2" height="2" fill="#c4c4c4"/><rect x="3" y="74" width="1" height="1" fill="#fff"/><rect x="8" y="74" width="1" height="2" fill="#c8c8c8"/><rect x="3" y="78" width="2" height="2" fill="#c4c4c4"/><rect x="3" y="78" width="1" height="1" fill="#fff"/><rect x="8" y="78" width="1" height="2" fill="#c8c8c8"/><rect x="351" y="54" width="2" height="2" fill="#c4c4c4"/><rect x="351" y="54" width="1" height="1" fill="#fff"/><rect x="356" y="54" width="1" height="2" fill="#c8c8c8"/><rect x="351" y="58" width="2" height="2" fill="#c4c4c4"/><rect x="351" y="58" width="1" height="1" fill="#fff"/><rect x="356" y="58" width="1" height="2" fill="#c8c8c8"/><rect x="351" y="62" width="2" height="2" fill="#c4c4c4"/><rect x="351" y="62" width="1" height="1" fill="#fff"/><rect x="356" y="62" width="1" height="2" fill="#c8c8c8"/><rect x="351" y="66" width="2" height="2" fill="#c4c4c4"/><rect x="351" y="66" width="1" height="1" fill="#fff"/><rect x="356" y="66" width="1" height="2" fill="#c8c8c8"/><rect x="351" y="70" width="2" height="2" fill="#c4c4c4"/><rect x="351" y="70" width="1" height="1" fill="#fff"/><rect x="356" y="70" width="1" height="2" fill="#c8c8c8"/><rect x="351" y="74" width="2" height="2" fill="#c4c4c4"/><rect x="351" y="74" width="1" height="1" fill="#fff"/><rect x="356" y="74" width="1" height="2" fill="#c8c8c8"/><rect x="351" y="78" width="2" height="2" fill="#c4c4c4"/><rect x="351" y="78" width="1" height="1" fill="#fff"/><rect x="356" y="78" width="1" height="2" fill="#c8c8c8"/><rect x="437" y="54" width="2" height="2" fill="#c4c4c4"/><rect x="437" y="54" width="1" height="1" fill="#fff"/><rect x="442" y="54" width="1" height="2" fill="#c8c8c8"/><rect x="437" y="58" width="2" height="2" fill="#c4c4c4"/><rect x="437" y="58" width="1" height="1" fill="#fff"/><rect x="442" y="58" width="1" height="2" fill="#c8c8c8"/><rect x="437" y="62" width="2" height="2" fill="#c4c4c4"/><rect x="437" y="62" width="1" height="1" fill="#fff"/><rect x="442" y="62" width="1" height="2" fill="#c8c8c8"/><rect x="437" y="66" width="2" height="2" fill="#c4c4c4"/><rect x="437" y="66" width="1" height="1" fill="#fff"/><rect x="442" y="66" width="1" height="2" fill="#c8c8c8"/><rect x="437" y="70" width="2" height="2" fill="#c4c4c4"/><rect x="437" y="70" width="1" height="1" fill="#fff"/><rect x="442" y="70" width="1" height="2" fill="#c8c8c8"/><rect x="437" y="74" width="2" height="2" fill="#c4c4c4"/><rect x="437" y="74" width="1" height="1" fill="#fff"/><rect x="442" y="74" width="1" height="2" fill="#c8c8c8"/><rect x="437" y="78" width="2" height="2" fill="#c4c4c4"/><rect x="437" y="78" width="1" height="1" fill="#fff"/><rect x="442" y="78" width="1" height="2" fill="#c8c8c8"/><rect x="522" y="54" width="2" height="2" fill="#c4c4c4"/><rect x="522" y="54" width="1" height="1" fill="#fff"/><rect x="527" y="54" width="1" height="2" fill="#c8c8c8"/><rect x="522" y="58" width="2" height="2" fill="#c4c4c4"/><rect x="522" y="58" width="1" height="1" fill="#fff"/><rect x="527" y="58" width="1" height="2" fill="#c8c8c8"/><rect x="522" y="62" width="2" height="2" fill="#c4c4c4"/><rect x="522" y="62" width="1" height="1" fill="#fff"/><rect x="527" y="62" width="1" height="2" fill="#c8c8c8"/><rect x="522" y="66" width="2" height="2" fill="#c4c4c4"/><rect x="522" y="66" width="1" height="1" fill="#fff"/><rect x="527" y="66" width="1" height="2" fill="#c8c8c8"/><rect x="522" y="70" width="2" height="2" fill="#c4c4c4"/><rect x="522" y="70" width="1" height="1" fill="#fff"/><rect x="527" y="70" width="1" height="2" fill="#c8c8c8"/><rect x="522" y="74" width="2" height="2" fill="#c4c4c4"/><rect x="522" y="74" width="1" height="1" fill="#fff"/><rect x="527" y="74" width="1" height="2" fill="#c8c8c8"/><rect x="522" y="78" width="2" height="2" fill="#c4c4c4"/><rect x="522" y="78" width="1" height="1" fill="#fff"/><rect x="527" y="78" width="1" height="2" fill="#c8c8c8"/><rect x="586" y="54" width="2" height="2" fill="#c4c4c4"/><rect x="586" y="54" width="1" height="1" fill="#fff"/><rect x="591" y="54" width="1" height="2" fill="#c8c8c8"/><rect x="586" y="58" width="2" height="2" fill="#c4c4c4"/><rect x="586" y="58" width="1" height="1" fill="#fff"/><rect x="591" y="58" width="1" height="2" fill="#c8c8c8"/><rect x="586" y="62" width="2" height="2" fill="#c4c4c4"/><rect x="586" y="62" width="1" height="1" fill="#fff"/><rect x="591" y="62" width="1" height="2" fill="#c8c8c8"/><rect x="586" y="66" width="2" height="2" fill="#c4c4c4"/><rect x="586" y="66" width="1" height="1" fill="#fff"/><rect x="591" y="66" width="1" height="2" fill="#c8c8c8"/><rect x="586" y="70" width="2" height="2" fill="#c4c4c4"/><rect x="586" y="70" width="1" height="1" fill="#fff"/><rect x="591" y="70" width="1" height="2" fill="#c8c8c8"/><rect x="586" y="74" width="2" height="2" fill="#c4c4c4"/><rect x="586" y="74" width="1" height="1" fill="#fff"/><rect x="591" y="74" width="1" height="2" fill="#c8c8c8"/><rect x="586" y="78" width="2" height="2" fill="#c4c4c4"/><rect x="586" y="78" width="1" height="1" fill="#fff"/><rect x="591" y="78" width="1" height="2" fill="#c8c8c8"/><rect x="649" y="54" width="2" height="2" fill="#c4c4c4"/><rect x="649" y="54" width="1" height="1" fill="#fff"/><rect x="654" y="54" width="1" height="2" fill="#c8c8c8"/><rect x="649" y="58" width="2" height="2" fill="#c4c4c4"/><rect x="649" y="58" width="1" height="1" fill="#fff"/><rect x="654" y="58" width="1" height="2" fill="#c8c8c8"/><rect x="649" y="62" width="2" height="2" fill="#c4c4c4"/><rect x="649" y="62" width="1" height="1" fill="#fff"/><rect x="654" y="62" width="1" height="2" fill="#c8c8c8"/><rect x="649" y="66" width="2" height="2" fill="#c4c4c4"/><rect x="649" y="66" width="1" height="1" fill="#fff"/><rect x="654" y="66" width="1" height="2" fill="#c8c8c8"/><rect x="649" y="70" width="2" height="2" fill="#c4c4c4"/><rect x="649" y="70" width="1" height="1" fill="#fff"/><rect x="654" y="70" width="1" height="2" fill="#c8c8c8"/><rect x="649" y="74" width="2" height="2" fill="#c4c4c4"/><rect x="649" y="74" width="1" height="1" fill="#fff"/><rect x="654" y="74" width="1" height="2" fill="#c8c8c8"/><rect x="649" y="78" width="2" height="2" fill="#c4c4c4"/><rect x="649" y="78" width="1" height="1" fill="#fff"/><rect x="654" y="78" width="1" height="2" fill="#c8c8c8"/><rect x="689" y="54" width="2" height="2" fill="#c4c4c4"/><rect x="689" y="54" width="1" height="1" fill="#fff"/><rect x="694" y="54" width="1" height="2" fill="#c8c8c8"/><rect x="689" y="58" width="2" height="2" fill="#c4c4c4"/><rect x="689" y="58" width="1" height="1" fill="#fff"/><rect x="694" y="58" width="1" height="2" fill="#c8c8c8"/><rect x="689" y="62" width="2" height="2" fill="#c4c4c4"/><rect x="689" y="62" width="1" height="1" fill="#fff"/><rect x="694" y="62" width="1" height="2" fill="#c8c8c8"/><rect x="689" y="66" width="2" height="2" fill="#c4c4c4"/><rect x="689" y="66" width="1" height="1" fill="#fff"/><rect x="694" y="66" width="1" height="2" fill="#c8c8c8"/><rect x="689" y="70" width="2" height="2" fill="#c4c4c4"/><rect x="689" y="70" width="1" height="1" fill="#fff"/><rect x="694" y="70" width="1" height="2" fill="#c8c8c8"/><rect x="689" y="74" width="2" height="2" fill="#c4c4c4"/><rect x="689" y="74" width="1" height="1" fill="#fff"/><rect x="694" y="74" width="1" height="2" fill="#c8c8c8"/><rect x="689" y="78" width="2" height="2" fill="#c4c4c4"/><rect x="689" y="78" width="1" height="1" fill="#fff"/><rect x="694" y="78" width="1" height="2" fill="#c8c8c8"/><rect x="798" y="54" width="2" height="2" fill="#c4c4c4"/><rect x="798" y="54" width="1" height="1" fill="#fff"/><rect x="803" y="54" width="1" height="2" fill="#c8c8c8"/><rect x="798" y="58" width="2" height="2" fill="#c4c4c4"/><rect x="798" y="58" width="1" height="1" fill="#fff"/><rect x="803" y="58" width="1" height="2" fill="#c8c8c8"/><rect x="798" y="62" width="2" height="2" fill="#c4c4c4"/><rect x="798" y="62" width="1" height="1" fill="#fff"/><rect x="803" y="62" width="1" height="2" fill="#c8c8c8"/><rect x="798" y="66" width="2" height="2" fill="#c4c4c4"/><rect x="798" y="66" width="1" height="1" fill="#fff"/><rect x="803" y="66" width="1" height="2" fill="#c8c8c8"/><rect x="798" y="70" width="2" height="2" fill="#c4c4c4"/><rect x="798" y="70" width="1" height="1" fill="#fff"/><rect x="803" y="70" width="1" height="2" fill="#c8c8c8"/><rect x="798" y="74" width="2" height="2" fill="#c4c4c4"/><rect x="798" y="74" width="1" height="1" fill="#fff"/><rect x="803" y="74" width="1" height="2" fill="#c8c8c8"/><rect x="798" y="78" width="2" height="2" fill="#c4c4c4"/><rect x="798" y="78" width="1" height="1" fill="#fff"/><rect x="803" y="78" width="1" height="2" fill="#c8c8c8"/><rect x="105" y="55" width="1" height="22" fill="#a0a0a0"/><rect x="106" y="55" width="1" height="22" fill="#fff"/><rect x="182" y="55" width="1" height="22" fill="#a0a0a0"/><rect x="183" y="55" width="1" height="22" fill="#fff"/><rect x="258" y="55" width="1" height="22" fill="#a0a0a0"/><rect x="259" y="55" width="1" height="22" fill="#fff"/><rect x="313" y="55" width="1" height="22" fill="#a0a0a0"/><rect x="314" y="55" width="1" height="22" fill="#fff"/><rect x="877" y="55" width="1" height="22" fill="#a0a0a0"/><rect x="878" y="55" width="1" height="22" fill="#fff"/><path d="M15.5 58.5 H22.5 L25.5 61.5 V70.5 H15.5 Z" fill="#fff" stroke="#000" stroke-width="1.2"/><path d="M22.5 58.5 V61.5 H25.5" fill="none" stroke="#000" stroke-width="1.2"/><path d="M36.5 70.5 V62.5 H37.5 V61.5 H39.5 V62.5 H46.5 V65.5" fill="#ffff00" stroke="#000" stroke-width="1.2"/><path d="M36.5 70.5 L40 65.5 H51 L47 70.5 Z" fill="#808000" stroke="#000" stroke-width="1.2" stroke-linejoin="round"/><path d="M44 60 Q47 57 50 60" fill="none" stroke="#000" stroke-width="1"/><path d="M48.5 61.5 H51 V59" fill="none" stroke="#000" stroke-width="1.2"/><rect x="59" y="58" width="14" height="14" fill="#000"/><rect x="60" y="59" width="12" height="12" fill="#808000"/><rect x="61" y="58.5" width="9" height="7" fill="#000"/><rect x="62" y="59" width="7" height="5" fill="#f0f0f0" stroke="#fff" stroke-width="0.8"/><rect x="62" y="67" width="8" height="5" fill="#000"/><rect x="68" y="68" width="1.5" height="3" fill="#fff"/><rect x="71" y="59" width="1" height="1" fill="#fff"/><path d="M85.5 58.5 H95.5 L93.5 64.5 H83.5 Z" fill="#fff" stroke="#000" stroke-width="1.1"/><path d="M87 60.5 H92 M86.5 62.5 H91" stroke="#000" stroke-width="0.9"/><path d="M81.5 65.5 H94.5 L96.5 68 V70.5 L94.5 72 H83.5 L81.5 70 Z" fill="#fff" stroke="#000" stroke-width="1.2"/><path d="M82 67.5 H94 M83 70.5 H94" stroke="#000" stroke-width="1"/><rect x="88" y="68" width="3" height="1.5" fill="#ffff00"/><g transform="translate(112 59) scale(1.0)"><path d="M3 0 H6 V3 H7 V6 H8 V3 H9 V0 H12 V3 H13 V6 H15 V13 H10 V9 H5 V13 H0 V6 H2 V3 H3 Z" fill="#000"/><rect x="4" y="1" width="1" height="1" fill="#fff"/><rect x="10" y="1" width="1" height="1" fill="#fff"/><rect x="2" y="6" width="1" height="2" fill="#fff"/><rect x="6" y="6" width="1" height="1" fill="#fff"/><rect x="9" y="6" width="1" height="2" fill="#fff"/><rect x="1" y="10" width="1" height="2" fill="#fff"/><rect x="11" y="10" width="1" height="2" fill="#fff"/></g><path d="M135 62 L139 58.5 V60.5 H146 V63.5 H139 V65.5 Z" fill="#ffff00"/><path d="M136 59 Q140 56.5 146 59.5" fill="none" stroke="#000" stroke-width="0.8" stroke-dasharray="1 1"/><g transform="translate(140 64) scale(0.75)"><path d="M3 0 H6 V3 H7 V6 H8 V3 H9 V0 H12 V3 H13 V6 H15 V13 H10 V9 H5 V13 H0 V6 H2 V3 H3 Z" fill="#000"/><rect x="4" y="1" width="1" height="1" fill="#fff"/><rect x="10" y="1" width="1" height="1" fill="#fff"/><rect x="2" y="6" width="1" height="2" fill="#fff"/><rect x="6" y="6" width="1" height="1" fill="#fff"/><rect x="9" y="6" width="1" height="2" fill="#fff"/><rect x="1" y="10" width="1" height="2" fill="#fff"/><rect x="11" y="10" width="1" height="2" fill="#fff"/></g><g transform="translate(158 64) scale(0.75)"><path d="M3 0 H6 V3 H7 V6 H8 V3 H9 V0 H12 V3 H13 V6 H15 V13 H10 V9 H5 V13 H0 V6 H2 V3 H3 Z" fill="#000"/><rect x="4" y="1" width="1" height="1" fill="#fff"/><rect x="10" y="1" width="1" height="1" fill="#fff"/><rect x="2" y="6" width="1" height="2" fill="#fff"/><rect x="6" y="6" width="1" height="1" fill="#fff"/><rect x="9" y="6" width="1" height="2" fill="#fff"/><rect x="1" y="10" width="1" height="2" fill="#fff"/><rect x="11" y="10" width="1" height="2" fill="#fff"/></g><path d="M174 62 L170 58.5 V60.5 H163 V63.5 H170 V65.5 Z" fill="#00ffff"/><path d="M163 59.5 Q168 56.5 173 59" fill="none" stroke="#000" stroke-width="0.8" stroke-dasharray="1 1"/><path d="M191.5 60.5 H194.5 V63.5 L202.5 60.5 V70.5 L194.5 67.5 V70.5 H191.5 Z" fill="#000" stroke="#ffff00" stroke-width="1.3"/><path d="M214.5 59.5 H225.5 V62.5 H222.5 V71.5 H217.5 V62.5 H214.5 Z" fill="#000" stroke="#ff0000" stroke-width="1.3"/><path d="M248.5 60.5 H245.5 V63.5 L237.5 60.5 V70.5 L245.5 67.5 V70.5 H248.5 Z" fill="#000" stroke="#00ffff" stroke-width="1.3"/><path d="M269.5 58.5 H274.5 L277.5 61.5 V66.5 L274.5 69.5 H269.5 L266.5 66.5 V61.5 Z" fill="none" stroke="#a0a0a0" stroke-width="1.2"/><path d="M275.5 67.5 L280 72" stroke="#a0a0a0" stroke-width="2"/><path d="M268.5 63.5 H275.5" stroke="#a0a0a0" stroke-width="1.5"/><path d="M292.5 58.5 H297.5 L300.5 61.5 V66.5 L297.5 69.5 H292.5 L289.5 66.5 V61.5 Z" fill="none" stroke="#a0a0a0" stroke-width="1.2"/><path d="M298.5 67.5 L303 72" stroke="#a0a0a0" stroke-width="2"/><path d="M291.5 63.5 H298.5" stroke="#a0a0a0" stroke-width="1.5"/><path d="M295 60.5 V67" stroke="#a0a0a0" stroke-width="1.5"/><path d="M324 62 H330 M324 62 L331 69" stroke="#808080" stroke-width="1"/><rect x="322" y="60" width="4" height="4" fill="#800000"/><rect x="324" y="61" width="1" height="2" fill="#0000c0"/><rect x="329.5" y="60" width="4" height="4" fill="#000"/><rect x="329.5" y="67.5" width="4" height="3.5" fill="#ff0000"/><rect x="360.5" y="59" width="3.5" height="3.5" fill="#0000ff"/><rect x="361.7" y="60" width="1.2" height="1.2" fill="#fff"/><rect x="360.5" y="64" width="3.5" height="3.5" fill="#0000ff"/><rect x="361.7" y="65" width="1.2" height="1.2" fill="#fff"/><rect x="360.5" y="69" width="3.5" height="3.5" fill="#0000ff"/><rect x="361.7" y="70" width="1.2" height="1.2" fill="#fff"/><path d="M365 60.5 H371 M365 65.5 H368 M365 70.5 H371" stroke="#0000ff" stroke-width="1.2"/><path d="M369.5 65.5 L372 63 V64.5 H376 V66.5 H372 V68 Z" fill="#ff0000"/><path d="M386.5 58 V63" stroke="#800000" stroke-width="1.2"/><path d="M385.0 62 L386.5 64.5 L388.0 62 Z" fill="#800000" stroke="#800000" stroke-width="0.8"/><rect x="385.9" y="72" width="1.2" height="1.5" fill="#000"/><path d="M390.5 58 V63" stroke="#800000" stroke-width="1.2"/><path d="M389.0 62 L390.5 64.5 L392.0 62 Z" fill="#800000" stroke="#800000" stroke-width="0.8"/><rect x="389.9" y="72" width="1.2" height="1.5" fill="#000"/><path d="M394.5 58 V63" stroke="#800000" stroke-width="1.2"/><path d="M393.0 62 L394.5 64.5 L396.0 62 Z" fill="#800000" stroke="#800000" stroke-width="0.8"/><rect x="393.9" y="72" width="1.2" height="1.5" fill="#000"/><path d="M383 69.5 H386.5 V65.5 H390.5 V69.5 H399" fill="none" stroke="#000" stroke-width="1.2"/><rect x="406" y="58" width="16" height="2" fill="#ff0000"/><rect x="406" y="71" width="16" height="2" fill="#ff0000"/><text x="405.5" y="69.5" font-family="Liberation Sans" font-size="11.5" fill="#000" textLength="16" lengthAdjust="spacingAndGlyphs">Trig</text><rect x="447" y="58" width="6" height="4" fill="#a8a8a8"/><rect x="446" y="62" width="8" height="2" fill="#a8a8a8"/><path d="M450.5 64 V68.5 H455" fill="none" stroke="#a8a8a8" stroke-width="1"/><rect x="455" y="66" width="6" height="4" fill="#a8a8a8"/><rect x="454" y="70" width="8" height="2" fill="#a8a8a8"/><rect x="469" y="58" width="16" height="2" fill="#a8a8a8"/><rect x="469" y="71" width="16" height="2" fill="#a8a8a8"/><text x="468.5" y="69.5" font-family="Liberation Sans" font-size="11.5" fill="#a8a8a8" textLength="16" lengthAdjust="spacingAndGlyphs">Trig</text><rect x="532.5" y="59" width="3.5" height="3.5" fill="#a8a8a8"/><rect x="533.7" y="60" width="1.2" height="1.2" fill="#f0f0f0"/><rect x="532.5" y="64" width="3.5" height="3.5" fill="#a8a8a8"/><rect x="533.7" y="65" width="1.2" height="1.2" fill="#f0f0f0"/><rect x="532.5" y="69" width="3.5" height="3.5" fill="#a8a8a8"/><rect x="533.7" y="70" width="1.2" height="1.2" fill="#f0f0f0"/><path d="M537 60.5 H543 M537 65.5 H540 M537 70.5 H543" stroke="#a8a8a8" stroke-width="1.2"/><path d="M541.5 65.5 L544 63 V64.5 H548 V66.5 H544 V68 Z" fill="#a8a8a8"/><rect x="555" y="58" width="16" height="2" fill="#a8a8a8"/><rect x="555" y="71" width="16" height="2" fill="#a8a8a8"/><text x="554.5" y="69.5" font-family="Liberation Sans" font-size="11.5" fill="#a8a8a8" textLength="16" lengthAdjust="spacingAndGlyphs">Trig</text><path d="M596 59.5 H603 M596 62.5 H603 M596 65.5 H603" stroke="#a8a8a8" stroke-width="1.5"/><path d="M605 65 L609 68.5 L605 72 Z" fill="#a8a8a8"/><path d="M619 59.5 H626 M619 62.5 H626 M619 65.5 H626" stroke="#a8a8a8" stroke-width="1.5"/><rect x="628" y="66" width="5" height="5" fill="#a8a8a8"/><path d="M659 62.5 H665 L669 59 H673 V73 H669 L665 69.5 H659 Z" fill="#a8a8a8"/><path d="M698 62 H706 M702 58 V66" stroke="#0000ff" stroke-width="2.2"/><g transform="translate(700.5 60)"><path d="M0.5 12.5 L2 9 L11 0.5 L13.5 3 L4.5 11.5 Z" fill="#ff0000" stroke="#000" stroke-width="1.1" stroke-linejoin="round"/><path d="M3.5 9.5 L11.5 2" stroke="#fff" stroke-width="0.9" stroke-dasharray="1.5 1.5"/><path d="M0.3 12.7 L1.3 9.8 L3.3 11.7 Z" fill="#ffff00" stroke="#000" stroke-width="0.8"/></g><path d="M721 62 H728 M725 58.5 L728.5 62 L725 65.5" fill="none" stroke="#0000ff" stroke-width="2"/><g transform="translate(723 60)"><path d="M0.5 12.5 L2 9 L11 0.5 L13.5 3 L4.5 11.5 Z" fill="#ff0000" stroke="#000" stroke-width="1.1" stroke-linejoin="round"/><path d="M3.5 9.5 L11.5 2" stroke="#fff" stroke-width="0.9" stroke-dasharray="1.5 1.5"/><path d="M0.3 12.7 L1.3 9.8 L3.3 11.7 Z" fill="#ffff00" stroke="#000" stroke-width="0.8"/></g><path d="M744.5 58 V65 M752.5 58 V65 M745 62 H752" stroke="#0000c0" stroke-width="1"/><path d="M746 62 L747.5 60.8 V63.2 Z M751 62 L749.5 60.8 V63.2 Z" fill="#0000c0"/><g transform="translate(745.5 60)"><path d="M0.5 12.5 L2 9 L11 0.5 L13.5 3 L4.5 11.5 Z" fill="#ff0000" stroke="#000" stroke-width="1.1" stroke-linejoin="round"/><path d="M3.5 9.5 L11.5 2" stroke="#fff" stroke-width="0.9" stroke-dasharray="1.5 1.5"/><path d="M0.3 12.7 L1.3 9.8 L3.3 11.7 Z" fill="#ffff00" stroke="#000" stroke-width="0.8"/></g><text x="755.5" y="73.5" font-family="Liberation Sans" font-weight="bold" font-size="6.5" fill="#000">T</text><text x="766.5" y="64.5" font-family="Liberation Sans" font-weight="bold" font-size="7.5" fill="#0000ff">OF</text><g transform="translate(768.5 60)"><path d="M0.5 12.5 L2 9 L11 0.5 L13.5 3 L4.5 11.5 Z" fill="#ff0000" stroke="#000" stroke-width="1.1" stroke-linejoin="round"/><path d="M3.5 9.5 L11.5 2" stroke="#fff" stroke-width="0.9" stroke-dasharray="1.5 1.5"/><path d="M0.3 12.7 L1.3 9.8 L3.3 11.7 Z" fill="#ffff00" stroke="#000" stroke-width="0.8"/></g><path d="M808 59 L822 65.5 L808 72 Z" fill="#00ff00"/><path d="M808 59 L822 65.5" stroke="#c8c800" stroke-width="0.8"/><path d="M808 72 L822 65.5" stroke="#006000" stroke-width="0.8"/><ellipse cx="838" cy="66.3" rx="7.7" ry="3.5" fill="none" stroke="#0000ff" stroke-width="1.2"/><path d="M833 58 L843 63 L833 68 Z" fill="#00ff00"/><path d="M836 69 L841 66.5 V72 Z" fill="#00ff00"/><rect x="855" y="61" width="12" height="10" fill="#a8a8a8"/><rect x="885" y="60" width="13.5" height="12" fill="#a8a8a8" stroke="#fff" stroke-width="1"/><path d="M887.5 62 L896 70 M896 62 L887.5 70" stroke="#fff" stroke-width="1.6"/><rect x="908" y="59" width="14" height="13" fill="#a8a8a8"/></svg>
<svg style="left:0;top:0" width="22" height="23" viewBox="0 0 22 23"><rect x="9" y="3" width="2" height="2" fill="#0000ff"/><rect x="9" y="6" width="2" height="2" fill="#0000ff"/><rect x="9" y="14" width="2" height="2" fill="#0000ff"/><rect x="9" y="17" width="2" height="2" fill="#0000ff"/><rect x="4" y="5" width="2" height="2" fill="#0000ff"/><rect x="6" y="7" width="2" height="2" fill="#0000ff"/><rect x="14" y="5" width="2" height="2" fill="#0000ff"/><rect x="12" y="7" width="2" height="2" fill="#0000ff"/><rect x="6" y="13" width="2" height="2" fill="#0000ff"/><rect x="4" y="15" width="2" height="2" fill="#0000ff"/><rect x="12" y="13" width="2" height="2" fill="#0000ff"/><rect x="14" y="15" width="2" height="2" fill="#0000ff"/><rect x="2" y="10" width="2" height="2" fill="#0000ff"/><rect x="5" y="10" width="2" height="2" fill="#0000ff"/><rect x="13" y="10" width="2" height="2" fill="#0000ff"/><rect x="16" y="10" width="2" height="2" fill="#0000ff"/><rect x="2" y="3" width="1" height="1" fill="#0000ff"/><rect x="17" y="3" width="1" height="1" fill="#0000ff"/><rect x="2" y="18" width="1" height="1" fill="#0000ff"/><rect x="17" y="18" width="1" height="1" fill="#0000ff"/></svg>
<svg style="left:0;top:0" width="30" height="50" viewBox="0 0 30 50"><rect x="9" y="28" width="16" height="16" fill="#000"/><rect x="10" y="29" width="4" height="2" fill="#ff0000"/><rect x="15" y="29" width="3" height="2" fill="#ff0000"/><rect x="19" y="29" width="5" height="2" fill="#ff0000"/><rect x="10" y="32" width="4" height="1" fill="#fff"/><rect x="15" y="32" width="3" height="1" fill="#fff"/><rect x="19" y="32" width="5" height="1" fill="#fff"/><rect x="10" y="34" width="4" height="1" fill="#fff"/><rect x="15" y="34" width="3" height="1" fill="#fff"/><rect x="19" y="34" width="5" height="1" fill="#fff"/><rect x="10" y="36" width="4" height="1" fill="#fff"/><rect x="15" y="36" width="3" height="1" fill="#fff"/><rect x="19" y="36" width="5" height="1" fill="#fff"/><rect x="10" y="38" width="4" height="1" fill="#fff"/><rect x="15" y="38" width="3" height="1" fill="#fff"/><rect x="19" y="38" width="5" height="1" fill="#fff"/><rect x="10" y="40" width="4" height="1" fill="#fff"/><rect x="15" y="40" width="3" height="1" fill="#fff"/><rect x="19" y="40" width="5" height="1" fill="#fff"/><rect x="10" y="42" width="4" height="1" fill="#fff"/><rect x="15" y="42" width="3" height="1" fill="#fff"/><rect x="19" y="42" width="5" height="1" fill="#fff"/><rect x="3" y="25" width="2" height="2" fill="#c4c4c4"/><rect x="7" y="25" width="1" height="2" fill="#c8c8c8"/><rect x="3" y="29" width="2" height="2" fill="#c4c4c4"/><rect x="7" y="29" width="1" height="2" fill="#c8c8c8"/><rect x="3" y="33" width="2" height="2" fill="#c4c4c4"/><rect x="7" y="33" width="1" height="2" fill="#c8c8c8"/><rect x="3" y="37" width="2" height="2" fill="#c4c4c4"/><rect x="7" y="37" width="1" height="2" fill="#c8c8c8"/><rect x="3" y="41" width="2" height="2" fill="#c4c4c4"/><rect x="7" y="41" width="1" height="2" fill="#c8c8c8"/><rect x="3" y="45" width="2" height="2" fill="#c4c4c4"/><rect x="7" y="45" width="1" height="2" fill="#c8c8c8"/></svg>
<svg style="left:1790px;top:0" width="130" height="52" viewBox="1790 0 130 52"><rect x="1799" y="10" width="10.5" height="1.1" fill="#000"/><rect x="1844.6" y="7.6" width="7.8" height="7.8" rx="1.5" fill="none" stroke="#000" stroke-width="1.1"/><path d="M1846.6 5.5 H1852.5 Q1854.5 5.5 1854.5 7.5 V13.4" fill="none" stroke="#000" stroke-width="1.1"/><path d="M1890 5 L1900.2 15.2 M1900.2 5 L1890 15.2" stroke="#000" stroke-width="1.1"/><rect x="1859.5" y="29.5" width="15" height="15" rx="1" fill="#fff" stroke="#e8e8e8"/><rect x="1878.5" y="29.5" width="15" height="15" rx="1" fill="#fff" stroke="#e8e8e8"/><rect x="1899.5" y="29.5" width="15" height="15" rx="1" fill="#fff" stroke="#e8e8e8"/><rect x="1863" y="39" width="6" height="2" fill="#5d7189"/><path d="M1882.5 37.5 H1887.5 V40.5 H1882.5 Z M1884.5 34.5 H1889.5 V37.5" fill="none" stroke="#5d7189" stroke-width="1"/><rect x="1882" y="36.5" width="6" height="1.3" fill="#5d7189"/><rect x="1884" y="33.5" width="6" height="1.3" fill="#5d7189"/><path d="M1904 34.5 L1910 40.5 M1910 34.5 L1904 40.5" stroke="#5d7189" stroke-width="1.8"/><rect x="1918" y="23" width="1" height="27" fill="#a0a0a0"/></svg>
<svg style="left:0;top:84px" width="20" height="32" viewBox="0 84 20 32"><rect x="6" y="87" width="1" height="25" fill="#fff"/><rect x="8" y="87" width="1" height="25" fill="#8c8c8c"/><rect x="6" y="112" width="3" height="1" fill="#8c8c8c"/><rect x="10" y="87" width="1" height="25" fill="#fff"/><rect x="12" y="87" width="1" height="25" fill="#8c8c8c"/><rect x="10" y="112" width="3" height="1" fill="#8c8c8c"/></svg>
<svg style="left:17px;top:175px" width="24" height="45" viewBox="17 175 24 45"><rect x="18.5" y="179.5" width="10" height="12" fill="#ffff00" stroke="#000" stroke-width="1"/><rect x="20" y="184" width="7" height="1.3" fill="#000"/><path d="M20 189 L23.5 185 L27 189 Z" fill="#000"/><path d="M30 185.5 H37" stroke="#ffff00" stroke-width="1.2"/><path d="M35 182.5 L39 185.5 L35 188.5 Z" fill="#ffff00"/><path d="M21 203.5 H28 M24.9 203.5 L23 211.3" fill="none" stroke="#ff0000" stroke-width="1.4"/><rect x="20" y="212" width="7" height="1.3" fill="#ff0000"/><path d="M30 206.5 H37" stroke="#ff0000" stroke-width="1.2"/><path d="M35 203.5 L39 206.5 L35 209.5 Z" fill="#ff0000"/></svg>
<svg style="left:0;top:1104px" width="320" height="26" viewBox="0 1104 320 26"><rect x="18" y="1108" width="16" height="16" fill="#c0c0c0"/><rect x="33" y="1108" width="1" height="16" fill="#808080"/><rect x="18" y="1123" width="16" height="1" fill="#808080"/><rect x="20" y="1111" width="3" height="3" fill="#ff0000"/><rect x="22" y="1111" width="1.5" height="3" fill="#0000ff"/><rect x="27" y="1111" width="3" height="3" fill="#000"/><path d="M23 1112.5 H27 M22.5 1114 L27.5 1119" stroke="#000" stroke-width="0.8"/><rect x="27" y="1117.5" width="4" height="3.5" fill="#fff" stroke="#000" stroke-width="0.9"/><rect x="28.5" y="1118.5" width="2" height="1.5" fill="#ff0000"/><rect x="158" y="1108" width="16" height="16" fill="#000"/><path d="M160 1109.5 H162.5 V1114.5 H167.5 V1109.5 H173 M160 1117.5 H165.5 V1122.5 H170.5 V1117.5 H173" fill="none" stroke="#00ff00" stroke-width="1.1"/><rect x="159" y="1111" width="2" height="2" fill="#ff0000"/><rect x="159" y="1119" width="2" height="2" fill="#ff0000"/><rect x="297" y="1108" width="16" height="16" fill="#000"/><rect x="298" y="1109" width="4" height="2" fill="#ff0000"/><rect x="303" y="1109" width="4" height="2" fill="#ff0000"/><rect x="308" y="1109" width="4" height="2" fill="#ff0000"/><rect x="298" y="1112" width="4" height="1" fill="#fff"/><rect x="303" y="1112" width="4" height="1" fill="#fff"/><rect x="308" y="1112" width="4" height="1" fill="#fff"/><rect x="298" y="1114" width="4" height="1" fill="#fff"/><rect x="303" y="1114" width="4" height="1" fill="#fff"/><rect x="308" y="1114" width="4" height="1" fill="#fff"/><rect x="298" y="1116" width="4" height="1" fill="#fff"/><rect x="303" y="1116" width="4" height="1" fill="#fff"/><rect x="308" y="1116" width="4" height="1" fill="#fff"/><rect x="298" y="1118" width="4" height="1" fill="#fff"/><rect x="303" y="1118" width="4" height="1" fill="#fff"/><rect x="308" y="1118" width="4" height="1" fill="#fff"/><rect x="298" y="1120" width="4" height="1" fill="#fff"/><rect x="303" y="1120" width="4" height="1" fill="#fff"/><rect x="308" y="1120" width="4" height="1" fill="#fff"/><rect x="298" y="1122" width="4" height="1" fill="#fff"/><rect x="303" y="1122" width="4" height="1" fill="#fff"/><rect x="308" y="1122" width="4" height="1" fill="#fff"/></svg>
</body></html>
